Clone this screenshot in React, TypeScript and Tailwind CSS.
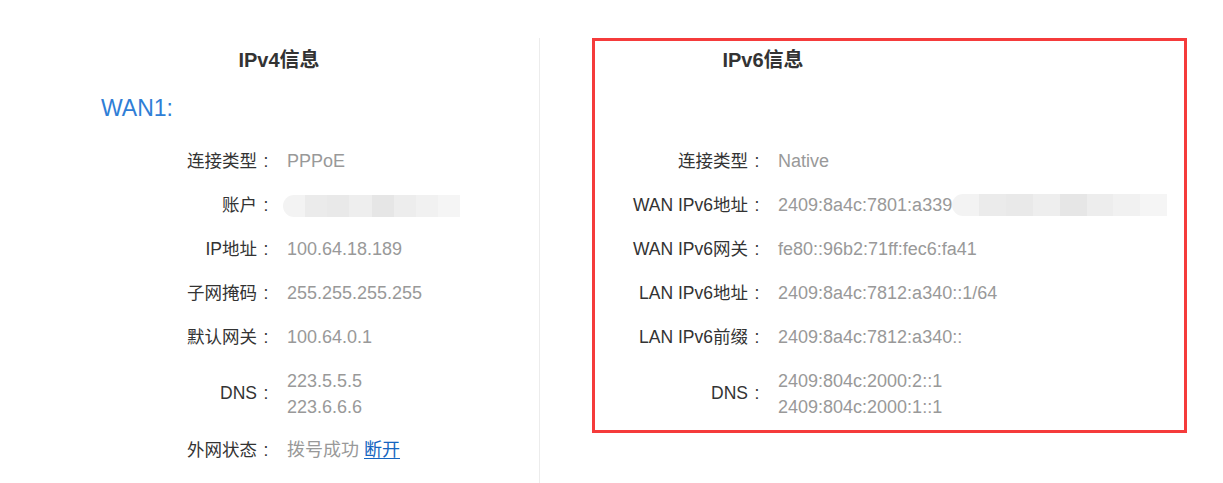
import React from "react";

type Row = { label: string; values: React.ReactNode[] };

const font = "font-['Liberation_Sans','Noto_Sans_CJK_SC',sans-serif]";

// pixelated smear that hides a private value
const Blur = ({ width, className = "" }: { width: number; className?: string }) => {
  const tones = ["#f3f3f3", "#ebebeb", "#e9e9e9", "#eeeeee", "#e6e6e6", "#ededed", "#f1f1f1", "#f5f5f5"];
  return (
    <span
      className={`inline-flex h-[22px] overflow-hidden rounded-l-full rounded-r-[12px] align-middle ${className}`}
      style={{ width }}
    >
      {tones.map((c, i) => (
        <span key={i} className="h-full flex-1" style={{ background: c }} />
      ))}
    </span>
  );
};

const InfoRow = ({ row, labelWidth }: { row: Row; labelWidth: string }) => (
  <div className={`flex items-center ${row.values.length > 1 ? "h-[69px]" : "h-[44px]"}`}>
    <div className={`${labelWidth} flex shrink-0 justify-end text-[17.5px] text-[#333]`}>
      <span>{row.label}</span>
      <span className="w-[18px] text-center">:</span>
    </div>
    <div className="ml-[12px] flex flex-col text-[18px] leading-[26px] text-[#999]">
      {row.values.map((v, i) => (
        <span key={i} className="whitespace-nowrap">
          {v}
        </span>
      ))}
    </div>
  </div>
);

const ipv4: Row[] = [
  { label: "连接类型", values: ["PPPoE"] },
  { label: "账户", values: [<Blur key="b" width={177} className="-ml-[4px]" />] },
  { label: "IP地址", values: ["100.64.18.189"] },
  { label: "子网掩码", values: ["255.255.255.255"] },
  { label: "默认网关", values: ["100.64.0.1"] },
  { label: "DNS", values: ["223.5.5.5", "223.6.6.6"] },
  {
    label: "外网状态",
    values: [
      <span key="s">
        拨号成功{" "}
        <a href="#" className="text-[#1565c0] underline underline-offset-2">
          断开
        </a>
      </span>,
    ],
  },
];

const ipv6: Row[] = [
  { label: "连接类型", values: ["Native"] },
  {
    label: "WAN IPv6地址",
    values: [
      <span key="w" className="inline-flex items-center">
        2409:8a4c:7801:a339
        <Blur width={215} />
      </span>,
    ],
  },
  { label: "WAN IPv6网关", values: ["fe80::96b2:71ff:fec6:fa41"] },
  { label: "LAN IPv6地址", values: ["2409:8a4c:7812:a340::1/64"] },
  { label: "LAN IPv6前缀", values: ["2409:8a4c:7812:a340::"] },
  { label: "DNS", values: ["2409:804c:2000:2::1", "2409:804c:2000:1::1"] },
];

export default function App() {
  return (
    <div className={`flex h-[483px] w-[1223px] overflow-hidden bg-white ${font}`}>
      <section className="mt-[38px] w-[540px] shrink-0 border-r border-[#ececec]">
        <h3 className="ml-[199px] mt-[10px] w-[160px] text-center text-[20px] font-bold leading-[24px] text-[#333]">
          IPv4信息
        </h3>
        <div className="ml-[101px] mt-[21px] text-[23px] leading-[30px] text-[#2f7ed6]">WAN1:</div>
        <div className="mt-[16px]">
          {ipv4.map((r) => (
            <InfoRow key={r.label} row={r} labelWidth="w-[275px]" />
          ))}
        </div>
      </section>

      <section className="ml-[52px] mt-[38px] h-[395px] w-[595px] shrink-0 border-[3px] border-[#f53b3b]">
        <h3 className="ml-[90px] mt-[7px] w-[156px] text-center text-[20px] font-bold leading-[24px] text-[#333]">
          IPv6信息
        </h3>
        <div className="mt-[67px]">
          {ipv6.map((r) => (
            <InfoRow key={r.label} row={r} labelWidth="w-[171px]" />
          ))}
        </div>
      </section>
    </div>
  );
}
